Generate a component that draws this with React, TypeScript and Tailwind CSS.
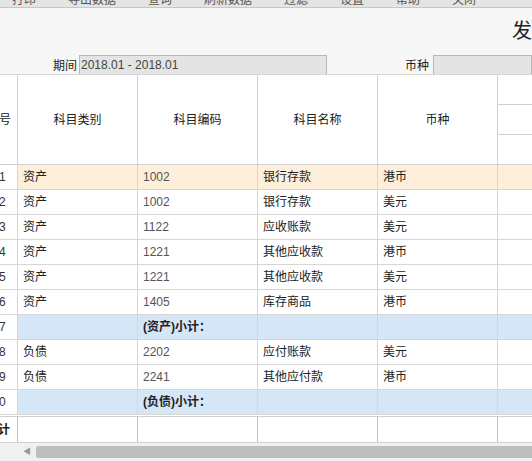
import React from 'react';

const rows = [
  { n: '1', t: '资产', c: '1002', name: '银行存款', cur: '港币', hl: true },
  { n: '2', t: '资产', c: '1002', name: '银行存款', cur: '美元' },
  { n: '3', t: '资产', c: '1122', name: '应收账款', cur: '美元' },
  { n: '4', t: '资产', c: '1221', name: '其他应收款', cur: '港币' },
  { n: '5', t: '资产', c: '1221', name: '其他应收款', cur: '美元' },
  { n: '6', t: '资产', c: '1405', name: '库存商品', cur: '港币' },
  { n: '7', sub: '(资产)小计：' },
  { n: '8', t: '负债', c: '2202', name: '应付账款', cur: '美元' },
  { n: '9', t: '负债', c: '2241', name: '其他应付款', cur: '港币' },
  { n: '10', sub: '(负债)小计：' },
];

const cols = 'grid grid-cols-[18px_120px_120px_120px_120px_1fr]';

export default function App() {
  return (
    <div className="w-[532px] h-[461px] overflow-hidden bg-white text-[12px] text-[#222]" style={{ fontFamily: '"Liberation Sans", "Noto Sans CJK SC", sans-serif' }}>
      {/* clipped toolbar */}
      <div className="h-[8px] bg-[#e4e4e4] border-b border-[#c8c8c8] overflow-hidden">
        <div className="-mt-[9px] flex gap-8 pl-3 text-[12px] text-[#555] whitespace-nowrap">
          <span>打印</span><span>导出数据</span><span>查询</span><span>刷新数据</span><span>过滤</span><span>设置</span><span>帮助</span><span>关闭</span>
        </div>
      </div>
      <div className="h-[67px] bg-[#f7f7f7] border-b border-[#d6d6d6] overflow-hidden">
        <div className="flex justify-end pt-[10px]">
          <span className="text-[20px] leading-[26px] text-[#222] -mr-[20px] whitespace-nowrap">发生</span>
        </div>
        <div className="flex items-center mt-[10px] h-[23px]">
          <span className="ml-[53px] mr-[2px]">期间</span>
          <div className="w-[248px] h-[21px] bg-[#e4e4e4] border border-[#b8b8b8] text-[#444] leading-[19px] pl-[1px]">2018.01 - 2018.01</div>
          <span className="ml-[78px] mr-[4px]">币种</span>
          <div className="flex-1 h-[21px] bg-[#e4e4e4] border border-[#b8b8b8]" />
        </div>
      </div>
      {/* header */}
      <div className={`${cols} h-[90px] border-b border-[#d0d0d0]`}>
        <div className="flex items-center border-r border-[#d0d0d0] -ml-[1px]">号</div>
        {['科目类别', '科目编码', '科目名称', '币种'].map(h => (
          <div key={h} className="flex items-center justify-center border-r border-[#d0d0d0]">{h}</div>
        ))}
        <div className="flex flex-col">
          <div className="h-[30px] border-b border-[#d0d0d0]" />
          <div className="h-[30px] border-b border-[#d0d0d0]" />
          <div className="flex-1" />
        </div>
      </div>
      {rows.map(r => (
        <div key={r.n} className={`${cols} h-[25px] border-b border-[#d6d6d6] ${r.hl ? 'bg-[#fdefd9]' : r.sub ? 'bg-[#d5e6f7]' : ''}`}>
          <div className="flex items-center border-r border-[#d6d6d6] bg-white text-[#333] -ml-[1px] overflow-hidden whitespace-nowrap">{r.n.length > 1 ? r.n.slice(1) : r.n}</div>
          <div className="flex items-center pl-[5px] border-r border-[#d6d6d6]">{r.t}</div>
          <div className={`flex items-center pl-[5px] border-r border-[#d6d6d6] ${r.sub ? 'font-bold' : 'text-[#555]'}`}>{r.sub ?? r.c}</div>
          <div className="flex items-center pl-[5px] border-r border-[#d6d6d6]">{r.name}</div>
          <div className="flex items-center pl-[5px] border-r border-[#d6d6d6]">{r.cur}</div>
          <div />
        </div>
      ))}
      <div className={`${cols} h-[27px] border-t border-[#d0d0d0] mt-[1px] border-b border-[#c0c0c0]`}>
        <div className="flex items-center border-r border-[#c0c0c0] font-bold -ml-[2px]">计</div>
        <div className="border-r border-[#c0c0c0]" />
        <div className="border-r border-[#c0c0c0]" />
        <div className="border-r border-[#c0c0c0]" />
        <div className="border-r border-[#c0c0c0]" />
        <div />
      </div>
      <div className="flex items-center h-[18px] bg-[#f0f0f0] pl-[18px]">
        <div className="w-[18px] flex items-center justify-center text-[8px] text-[#999]">◀</div>
        <div className="flex-1 h-[12px] bg-[#bdbdbd] rounded-l-[2px]" />
      </div>
    </div>
  );
}
